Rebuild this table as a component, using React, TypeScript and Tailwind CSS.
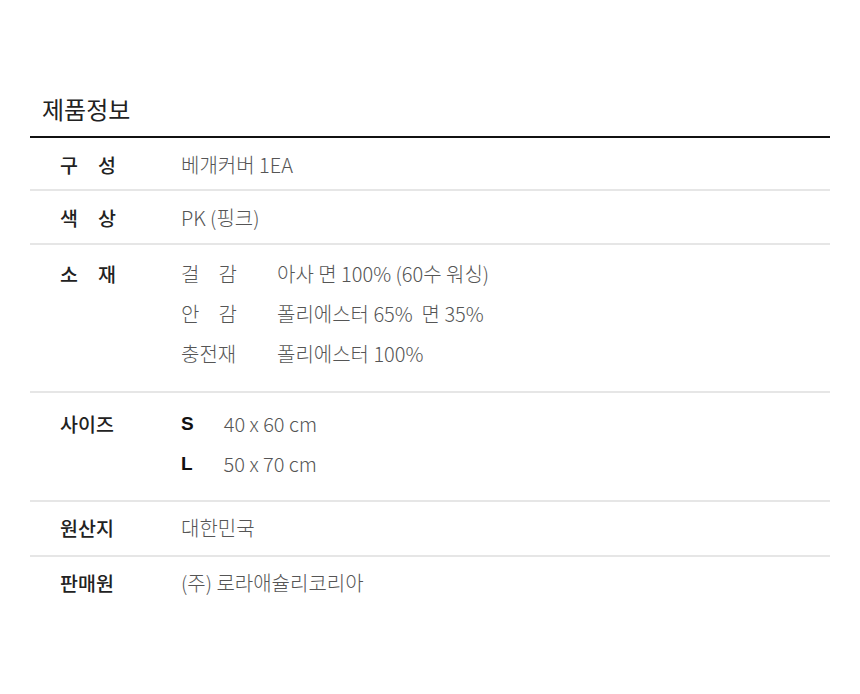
const FONT = "font-['Noto_Sans_CJK_KR','Noto_Sans',sans-serif]";

function Spread({ text, className = "" }: { text: string; className?: string }) {
  // two-letter labels are spread to the width of three letters
  return (
    <span className={`inline-flex justify-between ${className}`}>
      {text.split("").map((c, i) => (
        <span key={i}>{c}</span>
      ))}
    </span>
  );
}

function Label({ text }: { text: string }) {
  return (
    <div className="w-[151px] shrink-0 pl-[30px] text-[19.5px] font-medium text-[#222]">
      {text.length === 2 ? <Spread text={text} className="w-[56px]" /> : text}
    </div>
  );
}

const materials = [
  { k: "걸감", v: "아사 면 100% (60수 워싱)" },
  { k: "안감", v: "폴리에스터 65%\u00a0\u00a0면 35%" },
  { k: "충전재", v: "폴리에스터 100%" },
];

const sizes = [
  { k: "S", v: "40 x 60 cm", gap: "ml-[30px]" },
  { k: "L", v: "50 x 70 cm", gap: "ml-[31px]" },
];

export default function App() {
  return (
    <div className={`w-[860px] h-[694px] bg-white px-[30px] pt-[92px] ${FONT} text-[20px]`}>
      <h2 className="pl-[12px] pb-[10px] text-[24px] leading-[34px] font-normal text-[#222] border-b-2 border-[#111]">
        제품정보
      </h2>

      <div className="flex leading-[26px] pt-[14px] pb-[11px] border-b-2 border-[#e6e6e6]">
        <Label text="구성" />
        <div className="font-light text-[#555]">베개커버 1EA</div>
      </div>

      <div className="flex leading-[26px] pt-[14px] pb-[12px] border-b-2 border-[#e6e6e6]">
        <Label text="색상" />
        <div className="font-light text-[#555]">PK (핑크)</div>
      </div>

      <div className="flex leading-[40px] pt-[9px] pb-[17px] border-b-2 border-[#e6e6e6]">
        <Label text="소재" />
        <div className="flex flex-col font-light text-[#555]">
          {materials.map((m) => (
            <div key={m.k} className="flex">
              <div className="w-[96px] shrink-0">
                {m.k.length === 2 ? <Spread text={m.k} className="w-[56px]" /> : m.k}
              </div>
              <span>{m.v}</span>
            </div>
          ))}
        </div>
      </div>

      <div className="flex leading-[40px] pt-[11px] pb-[16px] border-b-2 border-[#e6e6e6]">
        <Label text="사이즈" />
        <div className="flex flex-col">
          {sizes.map((s) => (
            <div key={s.k} className="flex">
              <span className="font-['Liberation_Sans',sans-serif] text-[19px] font-bold text-[#111]">{s.k}</span>
              <span className={`${s.gap} font-light text-[#555]`}>{s.v}</span>
            </div>
          ))}
        </div>
      </div>

      <div className="flex leading-[26px] pt-[13px] pb-[14px] border-b-2 border-[#e6e6e6]">
        <Label text="원산지" />
        <div className="font-light text-[#555]">대한민국</div>
      </div>

      <div className="flex leading-[26px] pt-[13px] pb-[14px]">
        <Label text="판매원" />
        <div className="font-light text-[#555]">(주) 로라애슐리코리아</div>
      </div>
    </div>
  );
}
